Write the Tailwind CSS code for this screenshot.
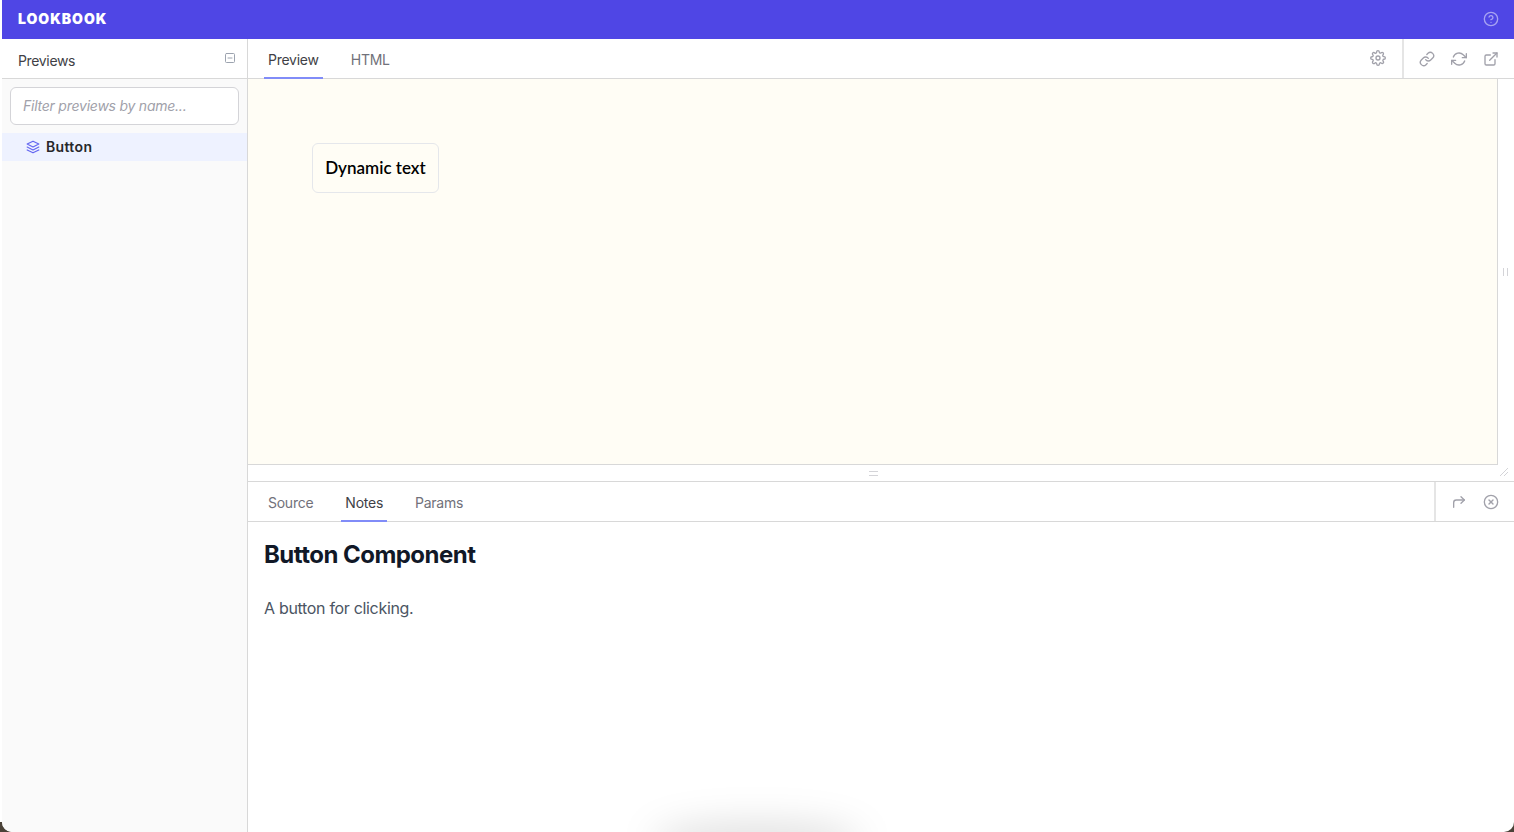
<!DOCTYPE html>
<html>
<head>
  <title>Lookbook</title>
  <script src="https://cdn.jsdelivr.net/npm/@tailwindcss/browser@4"></script>
</head>
<body class="bg-white font-['Inter',sans-serif] overflow-hidden">
  <div class="relative h-[832px] w-[1514px] pl-[2px] overflow-hidden">
    <div class="relative flex h-full flex-col overflow-hidden rounded-b-[10px] bg-white">
      <!-- Header -->
      <header class="flex h-[39px] shrink-0 items-center justify-between bg-[#4f46e5] pb-[2px] pl-4 pr-[15px]">
        <span class="text-[14px] font-black tracking-[0.07em] text-white">LOOKBOOK</span>
        <svg class="h-4 w-4 text-white/50" fill="none" stroke="currentColor" stroke-width="2" stroke-linecap="round" stroke-linejoin="round" viewBox="0 0 24 24">
          <circle cx="12" cy="12" r="10"/><path d="M9.09 9a3 3 0 0 1 5.83 1c0 2-3 3-3 3"/><path d="M12 17h.01"/>
        </svg>
      </header>

      <div class="flex min-h-0 flex-1">
        <!-- Sidebar -->
        <aside class="flex w-[246px] shrink-0 flex-col border-r border-[#d8d8d8] bg-[#fafafa]">
          <div class="flex h-[40px] shrink-0 items-center justify-between border-b border-[#d8d8d8] bg-white pl-4 pr-[11px]">
            <span class="pt-[3px] text-[14px] tracking-[-0.025em] text-[#3f3f46]">Previews</span>
            <svg class="mb-[2px] h-3 w-3 text-[#9ca3af]" fill="none" stroke="currentColor" stroke-width="2" stroke-linecap="round" stroke-linejoin="round" viewBox="0 0 24 24">
              <rect x="3" y="3" width="18" height="18" rx="2"/><path d="M8 12h8"/>
            </svg>
          </div>
          <div class="px-2 pt-2 pb-2">
            <input type="text" placeholder="Filter previews by name..." class="h-[38px] w-full rounded-md border border-[#d4d4d8] bg-white px-3 pb-[2px] text-[14px] tracking-[-0.017em] italic outline-none placeholder:text-[#a1a1aa]">
          </div>
          <div class="flex h-7 items-center gap-[6px] bg-[#eef2ff] pl-6">
            <svg class="h-[14px] w-[14px] text-[#6366f1]" fill="none" stroke="currentColor" stroke-width="2" stroke-linecap="round" stroke-linejoin="round" viewBox="0 0 24 24">
              <path d="M12 2 2 7l10 5 10-5-10-5z"/><path d="m2 12 10 5 10-5"/><path d="m2 17 10 5 10-5"/>
            </svg>
            <span class="pb-[2px] text-[14px] font-semibold tracking-[0.025em] text-[#27272a]">Button</span>
          </div>
        </aside>

        <!-- Main -->
        <main class="flex min-w-0 flex-1 flex-col">
          <div class="flex h-[40px] shrink-0 items-stretch justify-between border-b border-[#d8d8d8]">
            <div class="flex gap-6 pl-4 text-[14px] tracking-[-0.018em]">
              <span class="flex h-[40px] items-center border-b-2 border-[#818cf8] px-1 pt-[2px] text-[#3f3f46]">Preview</span>
              <span class="flex h-[40px] items-center border-b-2 border-transparent px-1 pt-[2px] text-[#71717a]">HTML</span>
            </div>
            <div class="flex items-center text-[#a1a1aa]">
              <svg class="mr-4 mb-[1px] h-4 w-4" fill="none" stroke="currentColor" stroke-width="2" stroke-linecap="round" stroke-linejoin="round" viewBox="0 0 24 24">
                <circle cx="12" cy="12" r="3"/><path d="M19.4 15a1.65 1.65 0 0 0 .33 1.82l.06.06a2 2 0 1 1-2.83 2.83l-.06-.06a1.65 1.65 0 0 0-2.82 1.17V21a2 2 0 1 1-4 0v-.09A1.65 1.65 0 0 0 7.2 19.740l-.06.06a2 2 0 1 1-2.83-2.83l.06-.06a1.65 1.65 0 0 0-1.17-2.82H3a2 2 0 1 1 0-4h.09A1.65 1.65 0 0 0 4.26 7.2l-.06-.06a2 2 0 1 1 2.83-2.83l.06.06a1.65 1.65 0 0 0 2.82-1.17V3a2 2 0 1 1 4 0v.09a1.65 1.65 0 0 0 2.82 1.17l.06-.06a2 2 0 1 1 2.83 2.83l-.06.06a1.65 1.65 0 0 0 1.17 2.82H21a2 2 0 1 1 0 4h-.09a1.65 1.65 0 0 0-1.51 1.09z"/>
              </svg>
              <div class="flex h-full items-center gap-4 border-l-2 border-[#e5e5e5] pl-[15px] pr-[15px]">
                <svg class="h-4 w-4" fill="none" stroke="currentColor" stroke-width="2" stroke-linecap="round" stroke-linejoin="round" viewBox="0 0 24 24">
                  <path d="M10 13a5 5 0 0 0 7.54.54l3-3a5 5 0 0 0-7.07-7.07l-1.72 1.71"/><path d="M14 11a5 5 0 0 0-7.54-.54l-3 3a5 5 0 0 0 7.07 7.07l1.71-1.71"/>
                </svg>
                <svg class="h-4 w-4" fill="none" stroke="currentColor" stroke-width="2" stroke-linecap="round" stroke-linejoin="round" viewBox="0 0 24 24">
                  <path d="M23 4v6h-6"/><path d="M1 20v-6h6"/><path d="M3.51 9a9 9 0 0 1 14.85-3.36L23 10"/><path d="M1 14l4.64 4.36A9 9 0 0 0 20.49 15"/>
                </svg>
                <svg class="h-4 w-4" fill="none" stroke="currentColor" stroke-width="2" stroke-linecap="round" stroke-linejoin="round" viewBox="0 0 24 24">
                  <path d="M18 13v6a2 2 0 0 1-2 2H5a2 2 0 0 1-2-2V8a2 2 0 0 1 2-2h6"/><path d="M15 3h6v6"/><path d="M10 14 21 3"/>
                </svg>
              </div>
            </div>
          </div>

          <!-- Preview frame -->
          <div class="h-[386px] shrink-0 pr-[16px]">
            <div class="h-full border-r border-b border-[#d8d8d8] bg-[#fffdf5] pt-16 pl-16">
              <button class="h-[50px] w-[127px] rounded-md border border-[#e5e7eb] text-[17px] font-semibold text-black font-['Lato',sans-serif]">Dynamic text</button>
            </div>
          </div>

          <!-- Drawer resize bar -->
          <div class="relative flex h-[17px] shrink-0 items-center justify-center border-b border-[#d8d8d8] pr-[16px]">
            <div class="h-[5px] w-[9px] border-y border-[#d4d4d8]"></div>
            <svg class="absolute top-[2px] right-[5px] h-[10px] w-[10px] text-[#d4d4d8]" fill="none" stroke="currentColor" viewBox="0 0 10 10"><path d="M1 9 9 1M5 9l4-4"/></svg>
          </div>

          <!-- Drawer tabs -->
          <div class="flex h-[40px] shrink-0 items-stretch justify-between border-b border-[#d8d8d8]">
            <div class="flex gap-6 pl-4 text-[14px] tracking-[-0.018em]">
              <span class="flex h-[40px] items-center border-b-2 border-transparent px-1 pt-[2px] text-[#71717a]">Source</span>
              <span class="flex h-[40px] items-center border-b-2 border-[#818cf8] px-1 pt-[2px] text-[#3f3f46]">Notes</span>
              <span class="flex h-[40px] items-center border-b-2 border-transparent px-1 pt-[2px] text-[#71717a]">Params</span>
            </div>
            <div class="flex h-full items-center gap-4 border-l-2 border-[#e5e5e5] pl-[15px] pr-[15px] text-[#a1a1aa]">
              <svg class="h-4 w-4" fill="none" stroke="currentColor" stroke-width="2" stroke-linecap="round" stroke-linejoin="round" viewBox="0 0 24 24">
                <path d="m15 14 5-5-5-5"/><path d="M4 20v-7a4 4 0 0 1 4-4h12"/>
              </svg>
              <svg class="h-4 w-4" fill="none" stroke="currentColor" stroke-width="2" stroke-linecap="round" stroke-linejoin="round" viewBox="0 0 24 24">
                <circle cx="12" cy="12" r="10"/><path d="m15 9-6 6"/><path d="m9 9 6 6"/>
              </svg>
            </div>
          </div>

          <!-- Notes -->
          <div class="flex-1 px-4 pt-[17px]">
            <h1 class="text-[24px] leading-[32px] font-bold tracking-[-0.022em] text-[#111827]">Button Component</h1>
            <p class="mt-[23px] text-[16px] leading-[28px] tracking-[-0.02em] text-[#4b5563]">A button for clicking.</p>
          </div>
        </main>
      </div>

      <!-- Pane handle on the preview's right edge -->
      <div class="absolute top-[268px] right-[6px] h-2 w-[5px] border-x border-[#d4d4d8]"></div>

      <!-- Shadow rising from the bottom edge -->
      <div class="pointer-events-none absolute bottom-[-30px] left-[650px] h-[40px] w-[210px] rounded-[50%] bg-black/12 blur-[18px]"></div>
    </div>
    <div class="pointer-events-none absolute inset-0 -z-10 bg-[linear-gradient(to_top,#4a4238_10px,transparent_10px)]"></div>
  </div>
</body>
</html>
